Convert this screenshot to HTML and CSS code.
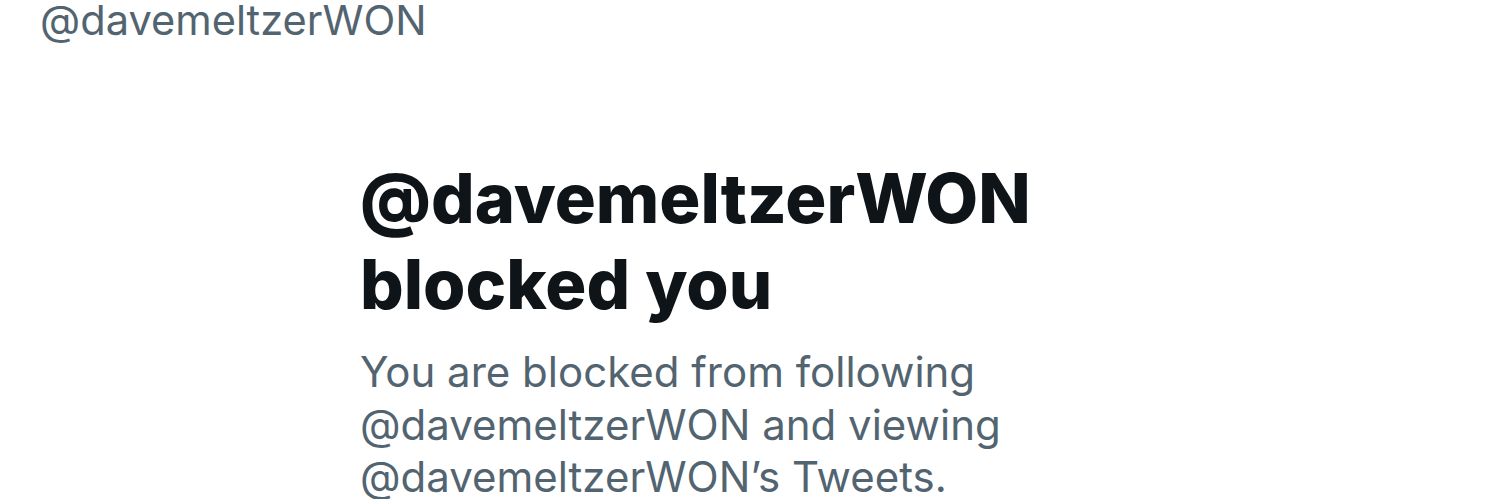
FILE: index.html
```html
<!DOCTYPE html>
<html>
<head>
<meta charset="utf-8">
<link rel="stylesheet" href="styles.css">
</head>
<body>
<div class="page">
  <div class="handle">@davemeltzerWON</div>
  <div class="blocked">
    <h1 class="title">@davemeltzerWON<br>blocked you</h1>
    <p class="desc">You are blocked from following<br>@davemeltzerWON and viewing<br>@davemeltzerWON’s Tweets.</p>
  </div>
</div>
</body>
</html>
```
FILE: styles.css
```css
html, body {
  margin: 0;
  padding: 0;
  background: #ffffff;
}
.page {
  width: 1500px;
  height: 499px;
  overflow: hidden;
  font-family: Inter, "Liberation Sans", Arial, sans-serif;
}
.handle {
  padding-left: 40px;
  font-size: 41.6px;
  line-height: 40px;
  color: #536471;
}
.blocked {
  padding-left: 360px;
  padding-top: 116px;
}
.title {
  margin: 0;
  font-size: 68.5px;
  line-height: 86px;
  font-weight: 800;
  color: #0f1419;
}
.desc {
  margin: 18px 0 0 0;
  font-size: 42px;
  line-height: 52.5px;
  color: #536471;
}
```
